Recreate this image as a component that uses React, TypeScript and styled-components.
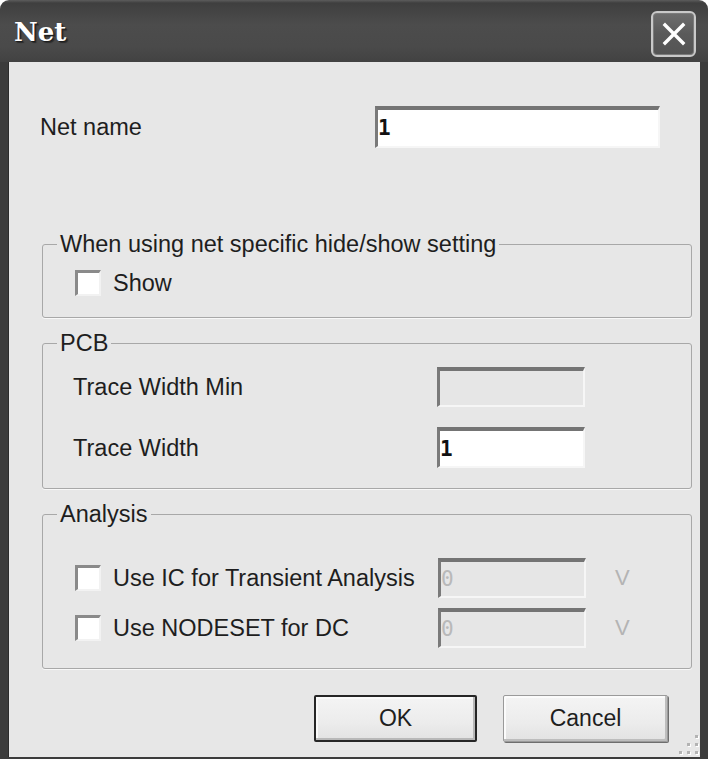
import styled, { createGlobalStyle } from "styled-components";

const GlobalStyle = createGlobalStyle`
  html, body {
    margin: 0;
    padding: 0;
    background: #ffffff;
  }
  body {
    font-family: "Liberation Sans", Arial, sans-serif;
  }
`;

const Window = styled.div`
  width: 708px;
  height: 759px;
  display: flex;
  flex-direction: column;
  overflow: hidden;
`;

const TitleBar = styled.div`
  height: 62px;
  flex: none;
  display: flex;
  align-items: center;
  justify-content: space-between;
  padding: 0 12px 0 14px;
  box-sizing: border-box;
  border-radius: 9px 9px 0 0;
  background: linear-gradient(#5c5c5c 0px, #3f3f3f 3px, #4c4c4c 40%, #4a4a4a 75%, #424242);
`;

const Title = styled.span`
  font-family: "DejaVu Serif", "Liberation Serif", serif;
  font-weight: bold;
  font-size: 26px;
  color: #ffffff;
  text-shadow: 1px 1px 0 #1e1e1e, 2px 2px 1px #2a2a2a;
  margin-top: 2px;
`;

const CloseButton = styled.button`
  width: 45px;
  height: 46px;
  margin-top: 6px;
  padding: 0;
  display: flex;
  align-items: center;
  justify-content: center;
  border: 2px solid #c9c9c9;
  border-radius: 6px;
  background: linear-gradient(#6e6e6e, #5a5a5a 50%, #545454);
  box-shadow: inset 0 0 0 1px #7c7c7c;
`;

const Frame = styled.div`
  flex: 1;
  display: flex;
  border-left: 8px solid #3c3c3c;
  border-right: 8px solid #3c3c3c;
  border-bottom: 4px solid #3c3c3c;
`;

const Body = styled.div`
  position: relative;
  flex: 1;
  display: flex;
  flex-direction: column;
  padding: 44px 8px 15px 34px;
  background: #e7e7e7;
  color: #1e1e1e;
  font-size: 23.5px;
  box-shadow: inset 1px 0 0 #2c2c2c;
`;

const NetRow = styled.div`
  display: grid;
  grid-template-columns: 335px 285px;
  align-items: center;
  margin-left: -2px;
`;

const Label = styled.span`
  line-height: 28px;
  white-space: nowrap;
`;

const TextBox = styled.div<{ $disabled?: boolean; $w: number; $h: number }>`
  width: ${(p) => p.$w}px;
  height: ${(p) => p.$h}px;
  box-sizing: border-box;
  display: flex;
  align-items: center;
  padding-left: 0px;
  border-top: 4px solid #747474;
  border-left: 3px solid #7a7a7a;
  border-right: 2px solid #f6f6f6;
  border-bottom: 2px solid #f6f6f6;
  background: ${(p) => (p.$disabled ? "#e6e6e6" : "#ffffff")};
  color: ${(p) => (p.$disabled ? "#b9b9b9" : "#111111")};
  font-family: "DejaVu Sans Mono", monospace;
  font-weight: ${(p) => (p.$disabled ? 400 : 700)};
  font-size: 21px;
`;

const Group = styled.fieldset<{ $top: number; $gap: number }>`
  margin: ${(p) => p.$top}px 0 0 0;
  padding: ${(p) => p.$gap}px 0 20px 32px;
  min-inline-size: 0;
  border: 1px solid #a8a8a8;
  border-radius: 3px;
  box-shadow: 0 1px 0 #f8f8f8;
  display: flex;
  flex-direction: column;
`;

const Legend = styled.legend`
  margin-left: -18px;
  padding: 0 3px;
  line-height: 24px;
  font-size: 23.5px;
  white-space: nowrap;
`;

const CheckRow = styled.label`
  display: flex;
  align-items: center;
  gap: 12px;
  height: 28px;
`;

const CheckBox = styled.span`
  width: 26px;
  height: 26px;
  box-sizing: border-box;
  flex: none;
  background: #ffffff;
  border-top: 3px solid #8a8a8a;
  border-left: 3px solid #8a8a8a;
  border-right: 2px solid #f2f2f2;
  border-bottom: 2px solid #f2f2f2;
`;

const FieldRows = styled.div<{ $gap: number }>`
  display: flex;
  flex-direction: column;
  gap: ${(p) => p.$gap}px;
`;

const FieldRow = styled.div<{ $col: number }>`
  display: grid;
  grid-template-columns: ${(p) => p.$col}px 148px auto;
  align-items: center;
`;

const PcbLabel = styled(Label)`
  margin-left: -2px;
`;

const Unit = styled.span`
  margin-left: 29px;
  color: #b4b4b4;
  font-size: 22px;
`;

const ButtonRow = styled.div`
  display: flex;
  justify-content: flex-end;
  gap: 26px;
  margin-top: 26px;
  padding-right: 24px;
`;

const Button = styled.button<{ $default?: boolean; $w: number }>`
  width: ${(p) => p.$w}px;
  height: 47px;
  padding: 0;
  font-family: "Liberation Sans", Arial, sans-serif;
  font-size: 23px;
  color: #1e1e1e;
  border-radius: 2px;
  background: linear-gradient(#f4f4f4, #ececec 60%, #e2e2e2);
  border: ${(p) => (p.$default ? "2px solid #262626" : "1px solid #9a9a9a")};
  box-shadow: ${(p) =>
    p.$default
      ? "inset -2px -2px 0 #b8b8b8, inset 2px 2px 0 #fafafa"
      : "inset -2px -2px 0 #bdbdbd, inset 2px 2px 0 #fbfbfb, 1px 1px 0 #6e6e6e"};
`;

const Grip = styled.svg`
  position: absolute;
  right: 1px;
  bottom: 2px;
`;

function ResizeGrip() {
  const dots = [
    [18, 2],
    [10, 10],
    [18, 10],
    [2, 18],
    [10, 18],
    [18, 18],
  ];
  return (
    <Grip width="22" height="22" viewBox="0 0 22 22">
      {dots.map(([x, y]) => (
        <g key={`${x}-${y}`}>
          <rect x={x + 1} y={y + 1} width="3" height="3" fill="#ffffff" />
          <rect x={x} y={y} width="3" height="3" fill="#b3b3b3" />
        </g>
      ))}
    </Grip>
  );
}

export default function App() {
  return (
    <>
      <GlobalStyle />
      <Window>
        <TitleBar>
          <Title>Net</Title>
          <CloseButton aria-label="Close">
            <svg width="26" height="26" viewBox="0 0 26 26">
              <path
                d="M4 4 L22 22 M22 4 L4 22"
                stroke="#ffffff"
                strokeWidth="3.4"
                strokeLinecap="square"
              />
            </svg>
          </CloseButton>
        </TitleBar>
        <Frame>
          <Body>
            <NetRow>
              <Label>Net name</Label>
              <TextBox $w={285} $h={42}>1</TextBox>
            </NetRow>

            <Group $top={84} $gap={13}>
              <Legend>When using net specific hide/show setting</Legend>
              <CheckRow>
                <CheckBox />
                <span>Show</span>
              </CheckRow>
            </Group>

            <Group $top={13} $gap={12}>
              <Legend>PCB</Legend>
              <FieldRows $gap={20}>
                <FieldRow $col={362}>
                  <PcbLabel>Trace Width Min</PcbLabel>
                  <TextBox $disabled $w={148} $h={40} />
                </FieldRow>
                <FieldRow $col={362}>
                  <PcbLabel>Trace Width</PcbLabel>
                  <TextBox $w={148} $h={41}>1</TextBox>
                </FieldRow>
              </FieldRows>
            </Group>

            <Group $top={13} $gap={32}>
              <Legend>Analysis</Legend>
              <FieldRows $gap={10}>
                <FieldRow $col={363}>
                  <CheckRow>
                    <CheckBox />
                    <span>Use IC for Transient Analysis</span>
                  </CheckRow>
                  <TextBox $disabled $w={148} $h={40}>0</TextBox>
                  <Unit>V</Unit>
                </FieldRow>
                <FieldRow $col={363}>
                  <CheckRow>
                    <CheckBox />
                    <span>Use NODESET for DC</span>
                  </CheckRow>
                  <TextBox $disabled $w={148} $h={40}>0</TextBox>
                  <Unit>V</Unit>
                </FieldRow>
              </FieldRows>
            </Group>

            <ButtonRow>
              <Button $default $w={163}>OK</Button>
              <Button $w={165}>Cancel</Button>
            </ButtonRow>
            <ResizeGrip />
          </Body>
        </Frame>
      </Window>
    </>
  );
}
